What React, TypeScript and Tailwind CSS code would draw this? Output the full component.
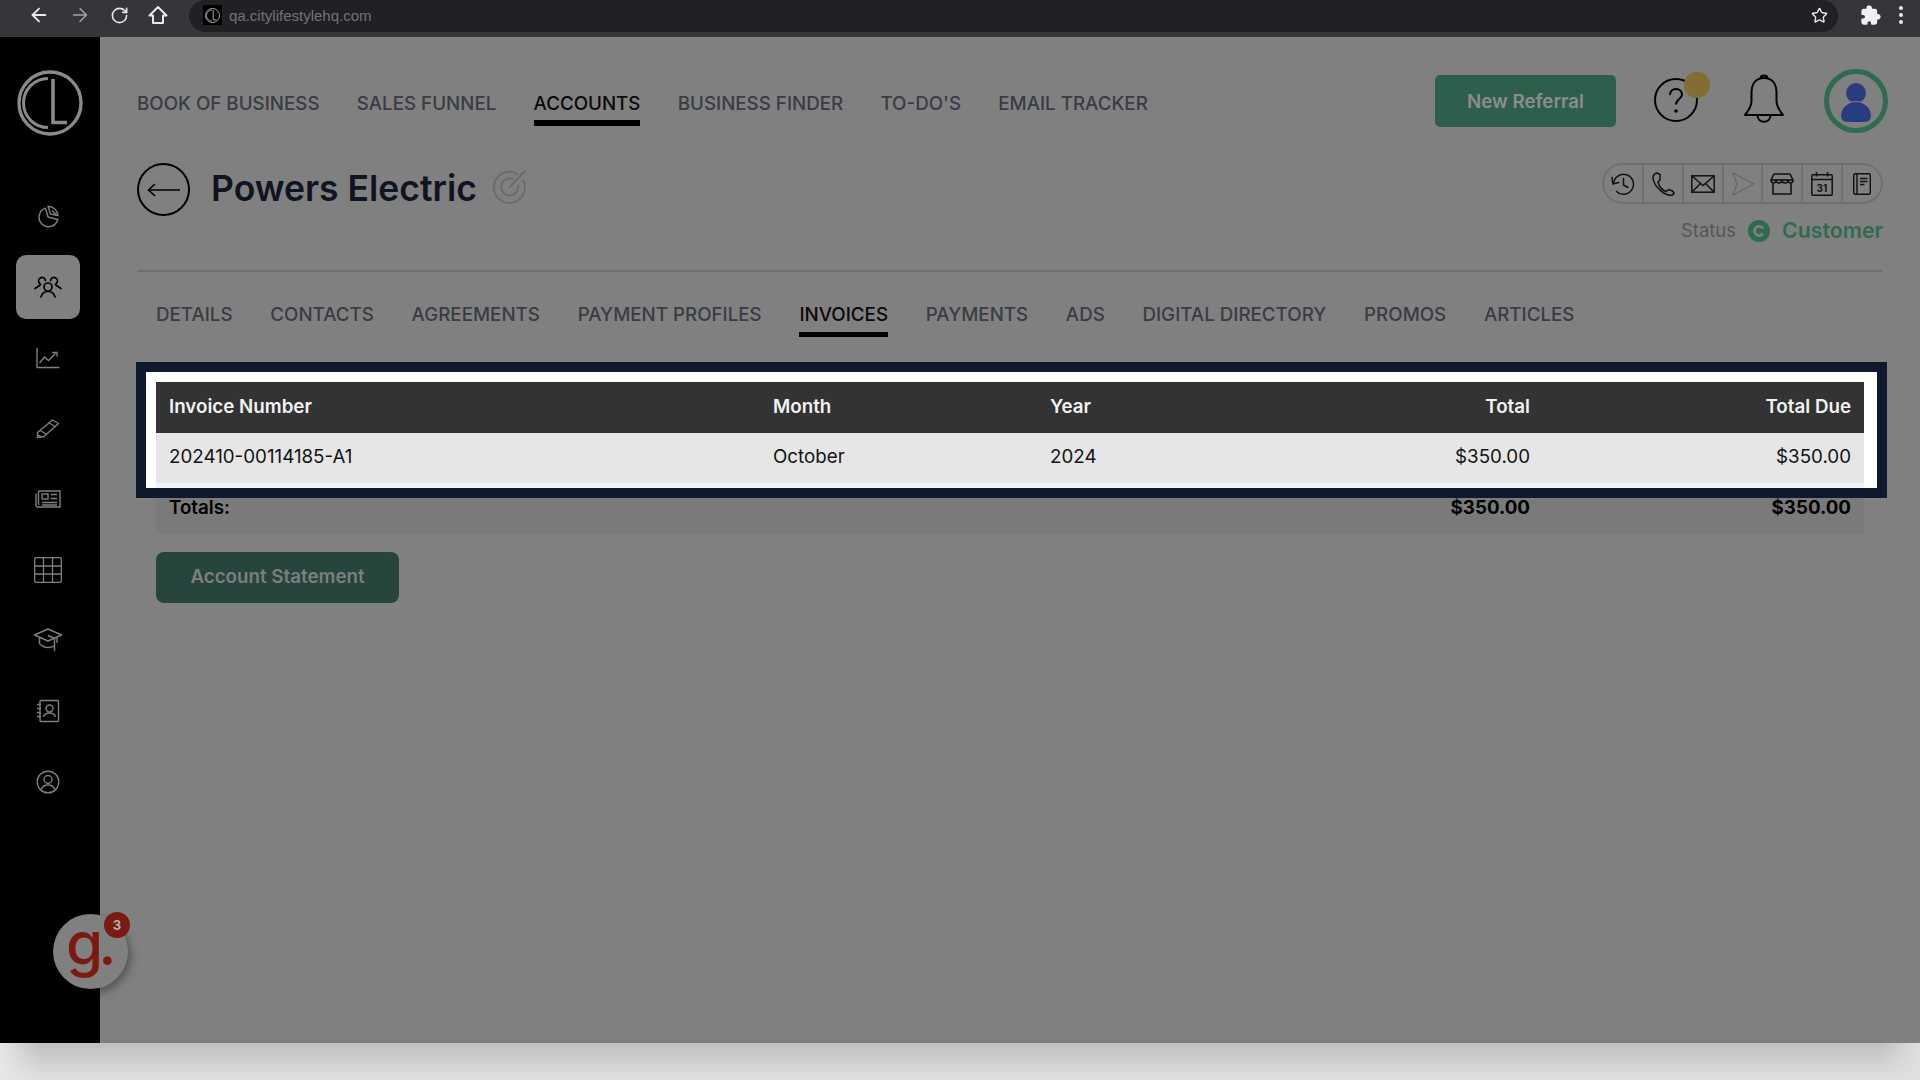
import React from "react";
import { ArrowLeft, ArrowRight, RotateCw, Star } from "lucide-react";
import { IoExtensionPuzzle } from "react-icons/io5";

const nav = ["BOOK OF BUSINESS", "SALES FUNNEL", "ACCOUNTS", "BUSINESS FINDER", "TO-DO'S", "EMAIL TRACKER"];
const tabs = ["DETAILS", "CONTACTS", "AGREEMENTS", "PAYMENT PROFILES", "INVOICES", "PAYMENTS", "ADS", "DIGITAL DIRECTORY", "PROMOS", "ARTICLES"];

const S = "#7f7f7f";

function CLLogo({ size, color }: { size: number; color: string }) {
  return (
    <svg width={size} height={size} viewBox="0 0 66 66" fill="none" stroke={color}>
      <circle cx="33" cy="33" r="31" strokeWidth="3.4" />
      <path d="M31 8.500A24.500 24.500 0 0 0 31 57.500" strokeWidth="3" />
      <path d="M36 9V52.500H50" strokeWidth="3.600" />
    </svg>
  );
}

const sideIcons = [
  <svg key="a" width="24" height="24" viewBox="0 0 24 24" fill="none" stroke={S} strokeWidth="1.4" strokeLinejoin="round">
    <path d="M9.500 4.200A9.500 9.500 0 1 0 21.800 15.500L12 13Z" />
    <path d="M12 2.200C17 2.200 21.600 6.400 22 11.500L14.500 10Z" />
    <path d="M16 6.500l5 5" />
  </svg>,
  <svg key="b" width="30" height="24" viewBox="0 0 30 24" fill="none" stroke="#000" strokeWidth="1.700" strokeLinecap="round">
    <circle cx="15" cy="12" r="4" />
    <path d="M8 22c.8-3.400 3.400-5.500 7-5.500s6.200 2.100 7 5.500" />
    <path d="M12.500 5.600A3.500 3.500 0 1 0 7 8.800c.4.400.5.800.3 1.200L2 13.500" />
    <path d="M17.500 5.600A3.500 3.500 0 1 1 23 8.800c-.4.400-.5.800-.3 1.200L28 13.500" />
  </svg>,
  <svg key="c" width="24" height="22" viewBox="0 0 24 22" fill="none" stroke={S} strokeWidth="1.400">
    <path d="M1 1V20.500H23.500" />
    <path d="M3.500 16l5-6 4 3.500 7-7" />
    <path d="M16 5.500h5v4" />
  </svg>,
  <svg key="d" width="24" height="22" viewBox="0 0 24 22" fill="none" stroke={S} strokeWidth="1.400" strokeLinejoin="round">
    <path d="M1.500 15.500 16.500 3l6 3.500L8 19.500 1.500 20.500Z" />
    <path d="M4 13.500l7 4M13 6l7 4" />
    <path d="M2 18l3 2" />
  </svg>,
  <svg key="e" width="26" height="18" viewBox="0 0 26 18" fill="none" stroke={S} strokeWidth="1.400">
    <path d="M3.500 1H25V17H2.500A1.500 1.500 0 0 1 1 15.500V3.500M3.500 1V15" />
    <rect x="7" y="4" width="6" height="5" />
    <path d="M15.500 4.500H22M15.500 8.500H22M7 12.500H22M7 15H22" />
  </svg>,
  <svg key="f" width="28" height="26" viewBox="0 0 28 26" fill="none" stroke={S} strokeWidth="1.300">
    <rect x="0.700" y="0.700" width="26.600" height="24.600" rx="1" />
    <path d="M9.500 1V25M18.500 1V25M1 9H27M1 17H27" />
  </svg>,
  <svg key="g" width="28" height="24" viewBox="0 0 28 24" fill="none" stroke={S} strokeWidth="1.400" strokeLinejoin="round">
    <path d="M14 1 27.500 7 14 13 .5 7Z" />
    <path d="M5.500 9.500v6C8 18.500 11 19.500 14 19.500s4.800-.6 6.500-1.400" />
    <path d="M23 9V15M20.500 18v5" />
    <path d="M14 7.500 20.500 10.500V18" />
  </svg>,
  <svg key="h" width="24" height="24" viewBox="0 0 24 24" fill="none" stroke={S} strokeWidth="1.400">
    <rect x="4" y="1.500" width="18.500" height="21" rx="1" />
    <circle cx="13.500" cy="9.500" r="3.500" />
    <path d="M7.500 18c.7-2.800 3-4 6-4s5.300 1.200 6 4" />
    <path d="M1 5.500h4M1 9.500h4M1 13.500h4M1 17.500h4" />
  </svg>,
  <svg key="i" width="24" height="24" viewBox="0 0 24 24" fill="none" stroke={S} strokeWidth="1.400">
    <circle cx="12" cy="12" r="10.800" />
    <circle cx="12" cy="9.500" r="4" />
    <path d="M4.800 20c1.400-3.400 3.900-5 7.200-5s5.800 1.600 7.200 5" />
  </svg>,
];

const I = "#111";
const actionIcons = [
  <svg key="1" width="24" height="24" viewBox="0 0 24 24" fill="none" stroke={I} strokeWidth="1.500" strokeLinecap="round" strokeLinejoin="round">
    <path d="M2.500 11.500A10 10 0 1 1 5.500 19.500" />
    <path d="M1 5.500l.8 6.500 6-1.500" />
    <path d="M12.500 6.500V13l4.500 2.500" />
  </svg>,
  <svg key="2" width="24" height="24" viewBox="0 0 24 24" fill="none" stroke={I} strokeWidth="1.500" strokeLinejoin="round">
    <path d="M6 1 9 2.500 9 8 7 10C8 14 11 18 15 19.500L17.500 17.500 21.500 19 23 21 21.500 23C14 24.500 3 15 2 6 2 3 3.500 1.500 6 1Z" />
  </svg>,
  <svg key="3" width="24" height="18" viewBox="0 0 24 18" fill="none" stroke={I} strokeWidth="1.500">
    <rect x="0.800" y="0.800" width="22.400" height="16.400" />
    <path d="M1 1 12 10.500 23 1M1 17 9.500 8.500M23 17 14.500 8.500" />
  </svg>,
  <svg key="4" width="24" height="24" viewBox="0 0 24 24" fill="none" stroke="#676767" strokeWidth="1.300" strokeLinejoin="round">
    <path d="M2 1 23 12 2 23 6 12Z" />
  </svg>,
  <svg key="5" width="24" height="22" viewBox="0 0 24 22" fill="none" stroke={I} strokeWidth="1.600" strokeLinejoin="round">
    <path d="M4 1H20L23 7C23 11 18 11 18 7 18 11 12 11 12 7 12 11 6 11 6 7 6 11 1 11 1 7Z" />
    <path d="M1 7H23" />
    <path d="M3 10.500V21H21V10.500" />
  </svg>,
  <svg key="6" width="22" height="24" viewBox="0 0 22 24" fill="none" stroke={I} strokeWidth="1.500">
    <rect x="0.800" y="2.800" width="20.400" height="20.400" rx="1" />
    <path d="M1 7.500H21M5.500 0V4.500M16.500 0V4.500" />
    <text x="11" y="20" textAnchor="middle" fontSize="10" fontWeight="700" fill={I} stroke="none" fontFamily="Inter, sans-serif">31</text>
  </svg>,
  <svg key="7" width="18" height="22" viewBox="0 0 18 22" fill="none" stroke={I} strokeWidth="1.400">
    <rect x="0.700" y="0.700" width="16.600" height="20.600" rx="1.500" />
    <path d="M4 1V21" />
    <path d="M7 5.500H14.500M7 8.500H14.500M7 11.500H11.500" />
  </svg>,
];

const cols = "grid grid-cols-[604px_277px_200px_280px_321px] items-center pl-[13px]";

export default function App() {
  return (
    <div className="relative w-[1920px] h-[1080px] overflow-hidden flex flex-col bg-[#808080] font-['Inter',sans-serif]">
      {/* browser chrome */}
      <div className="h-[37px] shrink-0 bg-[#35363a] flex items-start text-[#e8e8e8]">
        <div className="h-[30px] flex items-center pl-[28px] gap-[19px] w-[189px]">
          <ArrowLeft size={22} strokeWidth={2} />
          <ArrowRight size={22} strokeWidth={1.6} className="text-[#a4a4a4]" />
          <RotateCw size={19} strokeWidth={2} />
          <svg width="20" height="20" viewBox="0 0 20 20" fill="none" stroke="currentColor" strokeWidth="2" strokeLinejoin="round">
            <path d="M10 2 18.500 10.500H15V18H5V10.500H1.500Z" />
          </svg>
        </div>
        <div className="w-[1649px] h-[32px] rounded-full bg-[#202124] flex items-center pl-[14px] pr-[10px] pb-[2px]">
          <div className="w-[19px] h-[20px] bg-black flex items-center justify-center">
            <CLLogo size={15} color="#d0d0d0" />
          </div>
          <span className="ml-[7px] text-[15px] leading-none text-[#737373] font-['Liberation_Sans',sans-serif]">qa.citylifestylehq.com</span>
          <Star size={17} strokeWidth={2} className="ml-auto" />
        </div>
        <div className="flex-1 h-[30px] flex items-center pl-[22px] gap-[17px]">
          <IoExtensionPuzzle size={22} className="text-[#f0f0f0]" />
          <div className="flex flex-col gap-[3px]">
            <span className="w-[4px] h-[4px] rounded-full bg-[#e8e8e8]" />
            <span className="w-[4px] h-[4px] rounded-full bg-[#e8e8e8]" />
            <span className="w-[4px] h-[4px] rounded-full bg-[#e8e8e8]" />
          </div>
        </div>
      </div>

      <div className="h-[1006px] shrink-0 flex">
        {/* sidebar */}
        <aside className="w-[100px] shrink-0 bg-black flex flex-col items-center">
          <div className="pt-[33px] h-[144px]">
            <CLLogo size={66} color="#8a8a8a" />
          </div>
          <div className="w-full flex flex-col items-center">
            {sideIcons.map((ic, i) => (
              <div key={i} className="h-[70.700px] w-full flex items-center justify-center pr-[4px]">
                {i === 1 ? (
                  <div className="w-[64px] h-[64px] rounded-[10px] bg-[#808080] flex items-center justify-center">{ic}</div>
                ) : (
                  ic
                )}
              </div>
            ))}
          </div>
        </aside>

        {/* main */}
        <main className="flex-1 px-[37px] flex flex-col">
          <div className="pt-[32px] h-[96px] flex items-center justify-between">
            <nav className="flex items-start gap-[37.250px] mt-[16px] h-[33px] text-[18.750px] font-medium leading-[22px]">
              {nav.map((n) => (
                <div key={n} className={n === "ACCOUNTS" ? "h-[33px] text-[#0a0a0a] border-b-[6px] border-black" : "text-[#3a3c44]"}>
                  {n}
                </div>
              ))}
            </nav>
            <div className="flex items-center mr-[-5px]">
              <button className="w-[181px] h-[52px] pt-[2px] rounded-[5px] bg-[#2e5f4c] text-[#8c8c8c] text-[18.750px] font-semibold">New Referral</button>
              <div className="relative ml-[38px] w-[44px] h-[44px] mt-[-3px]">
                <svg width="44" height="44" viewBox="0 0 44 44" fill="none" stroke="#000" strokeWidth="2">
                  <circle cx="22" cy="22" r="21" />
                  <path d="M16 17c0-4 3-6 6-6s6 2 6 5.500c0 4.500-6 4.500-6 10" />
                  <circle cx="22" cy="33" r="1.800" fill="#000" stroke="none" />
                </svg>
                <span className="absolute left-[30px] top-[-6px] w-[26px] h-[26px] rounded-full bg-[#846c33]" />
              </div>
              <svg className="ml-[46px] mt-[-5px]" width="40" height="49" viewBox="0 0 40 49" fill="none" stroke="#000" strokeWidth="2" strokeLinejoin="round">
                <path d="M20 4C11 4 7.500 11 7.500 19V27C7.500 33 4 37 1 41H39C36 37 32.500 33 32.500 27V19C32.500 11 29 4 20 4Z" />
                <path d="M16.500 4.500C16.500 .5 23.500 .5 23.500 4.500" />
                <path d="M13.500 41C13.500 50 26.500 50 26.500 41" />
              </svg>
              <div className="ml-[40px] w-[64px] h-[64px] rounded-full border-[5px] border-[#2f6b51] flex flex-col items-center">
                <span className="mt-[9px] w-[20px] h-[20px] rounded-full bg-[#273d80]" />
                <span className="mt-[-2px] w-[30px] h-[21px] rounded-t-[15px] rounded-b-[6px] bg-[#273d80] border-t border-[#808080]" />
              </div>
            </div>
          </div>

          <div className="mt-[30px] flex justify-between h-[109px] border-b-2 border-[#6e6e6e]">
            <div className="flex items-start">
              <div className="w-[53px] h-[53px] rounded-full border-[2.500px] border-black flex items-center justify-center">
                <svg width="34" height="14" viewBox="0 0 34 14" fill="none" stroke="#000" strokeWidth="1.600">
                  <path d="M33 7H2M8 1 1.500 7 8 13" />
                </svg>
              </div>
              <h1 className="ml-[21px] mt-[4px] text-[35.500px] leading-[44px] font-semibold text-[#0f1420]">Powers Electric</h1>
              <svg className="ml-[15px] mt-[6px]" width="36" height="36" viewBox="0 0 36 36" fill="none" stroke="#6b6c6e" strokeWidth="2">
                <path d="M26 5.500A15.500 15.500 0 1 0 31 11" />
                <path d="M22 10.500A8.500 8.500 0 1 0 26 16" />
                <path d="M17 19 32 3" />
                <path d="M28 6l6-4" />
              </svg>
            </div>
            <div className="flex flex-col items-end">
              <div className="w-[281px] h-[41px] rounded-full border-2 border-[#707070] flex divide-x-2 divide-[#707070]">
                {actionIcons.map((ic, i) => (
                  <div key={i} className="flex-1 flex items-center justify-center">{ic}</div>
                ))}
              </div>
              <div className="mt-[15px] flex items-center h-[24px]">
                <span className="text-[18.500px] text-[#55565c]">Status</span>
                <span className="ml-[12px] w-[22px] h-[22px] rounded-full bg-[#2f6b51] flex items-center justify-center">
                  <svg width="12" height="12" viewBox="0 0 12 12" fill="none" stroke="#808080" strokeWidth="2.600">
                    <path d="M10 3.500A4.600 4.600 0 1 0 10 8.500" />
                  </svg>
                </span>
                <span className="ml-[12px] text-[21.300px] font-semibold text-[#2f6b51]">Customer</span>
              </div>
            </div>
          </div>

          <div className="mt-[32px] pl-[19px] flex gap-[37.700px] text-[18.750px] font-medium leading-[22px] h-[48px]">
            {tabs.map((t) => (
              <div key={t} className={t === "INVOICES" ? "h-[33px] text-[#0a0a0a] border-b-[5px] border-black" : "text-[#3a3c44]"}>
                {t}
              </div>
            ))}
          </div>

          {/* table */}
          <div className="relative mt-[30px] ml-[19px] mr-[19px] text-[18.750px]">
            <div className="relative">
              <div className="absolute left-[-20px] right-[-23px] top-[-20px] bottom-[-15px] border-[10px] border-[#0f1a2e] bg-white z-10" />
              <div className="relative z-20">
                <div className={`h-[51px] bg-[#333333] text-[#f2f2f2] font-semibold ${cols}`}>
                  <div>Invoice Number</div>
                  <div>Month</div>
                  <div>Year</div>
                  <div className="text-right">Total</div>
                  <div className="text-right">Total Due</div>
                </div>
                <div className={`h-[50px] pb-[2px] bg-[#e6e6e6] text-[#141414] ${cols}`}>
                  <div>202410-00114185-A1</div>
                  <div>October</div>
                  <div>2024</div>
                  <div className="text-right">$350.00</div>
                  <div className="text-right">$350.00</div>
                </div>
              </div>
            </div>
            <div className="relative">
              <div className="absolute left-0 right-0 top-0 h-[5px] bg-[#f4f4f4] z-20" />
              <div className={`h-[51px] bg-[#7a7a7a] text-black font-bold ${cols}`}>
                <div className="font-semibold">Totals:</div>
                <div />
                <div />
                <div className="text-right">$350.00</div>
                <div className="text-right">$350.00</div>
              </div>
            </div>
          </div>

          <button className="mt-[18px] ml-[19px] w-[243px] h-[51px] rounded-[8px] bg-[#27443d] text-[#7e7e7e] text-[18.750px] font-semibold">Account Statement</button>
        </main>
      </div>

      <div className="flex-1 bg-[linear-gradient(to_right,#e6e8e8_0,transparent_40px,transparent_1880px,#dfe1e1_100%),linear-gradient(to_bottom,#bec0be,#e0e1e1)]" />

      {/* floating widget */}
      <div className="absolute left-[53px] top-[914px] w-[75px] h-[75px] rounded-full bg-[#808080] shadow-[3px_4px_8px_rgba(0,0,0,0.35)] flex items-center justify-start pb-[17px] pl-[13px] text-[#7a1a10] text-[60px] font-medium leading-none tracking-[-5px]">
        <span>g.</span>
        <span className="absolute left-[51px] top-[-2px] w-[26px] h-[26px] rounded-full bg-[#7a1a10] text-[#b0b0b0] text-[13px] font-bold leading-none tracking-normal flex items-center justify-center">3</span>
      </div>
    </div>
  );
}
